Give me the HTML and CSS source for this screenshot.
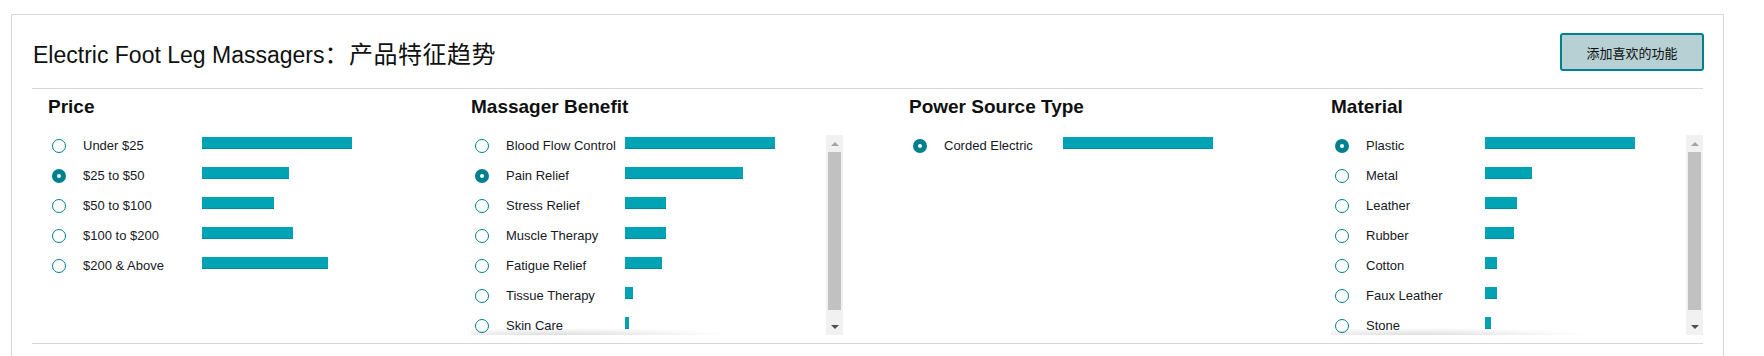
FILE: index.html
```html
<!DOCTYPE html>
<html lang="zh-CN">
<head>
    <meta charset="UTF-8">
    <meta name="viewport" content="width=device-width, initial-scale=1.0">
    <title>产品特征趋势</title>
    <link rel="stylesheet" href="styles.css">
</head>
<body>
    <div class="card">
        <div class="card-header">
            <h1 class="card-title">Electric Foot Leg Massagers<span class="title-zh">：产品特征趋势</span></h1>
            <button class="add-btn">添加喜欢的功能</button>
        </div>

        <div class="features">
            <!-- Price -->
            <div class="feature">
                <h2>Price</h2>
                <div class="list-wrap">
                    <div class="list">
                        <label class="row"><input type="radio" class="radio" name="price"><span class="name">Under $25</span><span class="bar" style="width: 150px;"></span></label>
                        <label class="row"><input type="radio" class="radio" name="price" checked><span class="name">$25 to $50</span><span class="bar" style="width: 87px;"></span></label>
                        <label class="row"><input type="radio" class="radio" name="price"><span class="name">$50 to $100</span><span class="bar" style="width: 72px;"></span></label>
                        <label class="row"><input type="radio" class="radio" name="price"><span class="name">$100 to $200</span><span class="bar" style="width: 91px;"></span></label>
                        <label class="row"><input type="radio" class="radio" name="price"><span class="name">$200 &amp; Above</span><span class="bar" style="width: 126px;"></span></label>
                    </div>
                </div>
            </div>

            <!-- Massager Benefit -->
            <div class="feature">
                <h2>Massager Benefit</h2>
                <div class="list-wrap scroll">
                    <div class="list">
                        <label class="row"><input type="radio" class="radio" name="benefit"><span class="name">Blood Flow Control</span><span class="bar" style="width: 150px;"></span></label>
                        <label class="row"><input type="radio" class="radio" name="benefit" checked><span class="name">Pain Relief</span><span class="bar" style="width: 118px;"></span></label>
                        <label class="row"><input type="radio" class="radio" name="benefit"><span class="name">Stress Relief</span><span class="bar" style="width: 41px;"></span></label>
                        <label class="row"><input type="radio" class="radio" name="benefit"><span class="name">Muscle Therapy</span><span class="bar" style="width: 41px;"></span></label>
                        <label class="row"><input type="radio" class="radio" name="benefit"><span class="name">Fatigue Relief</span><span class="bar" style="width: 37px;"></span></label>
                        <label class="row"><input type="radio" class="radio" name="benefit"><span class="name">Tissue Therapy</span><span class="bar" style="width: 8px;"></span></label>
                        <label class="row"><input type="radio" class="radio" name="benefit"><span class="name">Skin Care</span><span class="bar" style="width: 4px;"></span></label>
                    </div>
                    <div class="scrollbar">
                        <div class="sb-up"></div>
                        <div class="sb-track"><div class="sb-thumb"></div></div>
                        <div class="sb-down"></div>
                    </div>
                </div>
            </div>

            <!-- Power Source Type -->
            <div class="feature">
                <h2>Power Source Type</h2>
                <div class="list-wrap">
                    <div class="list">
                        <label class="row"><input type="radio" class="radio" name="power" checked><span class="name">Corded Electric</span><span class="bar" style="width: 150px;"></span></label>
                    </div>
                </div>
            </div>

            <!-- Material -->
            <div class="feature">
                <h2>Material</h2>
                <div class="list-wrap scroll">
                    <div class="list">
                        <label class="row"><input type="radio" class="radio" name="material" checked><span class="name">Plastic</span><span class="bar" style="width: 150px;"></span></label>
                        <label class="row"><input type="radio" class="radio" name="material"><span class="name">Metal</span><span class="bar" style="width: 47px;"></span></label>
                        <label class="row"><input type="radio" class="radio" name="material"><span class="name">Leather</span><span class="bar" style="width: 32px;"></span></label>
                        <label class="row"><input type="radio" class="radio" name="material"><span class="name">Rubber</span><span class="bar" style="width: 29px;"></span></label>
                        <label class="row"><input type="radio" class="radio" name="material"><span class="name">Cotton</span><span class="bar" style="width: 12px;"></span></label>
                        <label class="row"><input type="radio" class="radio" name="material"><span class="name">Faux Leather</span><span class="bar" style="width: 12px;"></span></label>
                        <label class="row"><input type="radio" class="radio" name="material"><span class="name">Stone</span><span class="bar" style="width: 6px;"></span></label>
                    </div>
                    <div class="scrollbar">
                        <div class="sb-up"></div>
                        <div class="sb-track"><div class="sb-thumb"></div></div>
                        <div class="sb-down"></div>
                    </div>
                </div>
            </div>
        </div>
    </div>
</body>
</html>
```

FILE: styles.css
```css
body {
    margin: 0;
    font-family: "Liberation Sans", "Noto Sans CJK SC", sans-serif;
    color: #0f1111;
    background: #fff;
}

.card {
    margin: 14px 40px 0 11px;
    padding: 0 20px 20px;
    border: 1px solid #d5d9d9;
}

.card-header {
    display: flex;
    justify-content: space-between;
    align-items: flex-start;
    padding: 18px 0 17px;
    border-bottom: 1px solid #d5d9d9;
}

.card-title {
    margin: 8px 0 0 1px;
    font-size: 23px;
    font-weight: normal;
    line-height: 28px;
}

.title-zh {
    font-size: 24px;
    letter-spacing: 0.5px;
}

.add-btn {
    width: 144px;
    height: 38px;
    margin-right: -1px;
    border: 2px solid #007f8f;
    border-radius: 3px;
    background: #b6d0d4;
    color: #0f1111;
    font-family: "Liberation Sans", "Noto Sans CJK SC", sans-serif;
    font-size: 13px;
    cursor: pointer;
}

.features {
    display: grid;
    grid-template-columns: 423px 438px 422px 388px;
    padding: 7px 0 8px;
    border-bottom: 1px solid #d5d9d9;
}

.feature {
    padding-left: 16px;
}

.feature h2 {
    margin: 0 0 17px;
    font-size: 19px;
    line-height: 22px;
    font-weight: bold;
}

.list-wrap {
    position: relative;
    display: flex;
    width: 372px;
    height: 200px;
}

.list {
    flex: 1;
    overflow: hidden;
}

/* sombra difuminada al final de la lista */
.list-wrap.scroll::after {
    content: "";
    position: absolute;
    left: 0;
    right: 17px;
    bottom: 0;
    height: 9px;
    background: radial-gradient(ellipse 60% 100% at 25% 100%, rgba(0, 0, 0, 0.13), rgba(0, 0, 0, 0) 80%);
    pointer-events: none;
}

.row {
    display: flex;
    align-items: flex-start;
    height: 22px;
    margin-bottom: 8px;
    cursor: pointer;
}

.radio {
    appearance: none;
    -webkit-appearance: none;
    flex: none;
    width: 14px;
    height: 14px;
    margin: 4px 17px 0 4px;
    border: 1.5px solid #007f8f;
    border-radius: 50%;
    background: #fff;
    box-sizing: border-box;
}

.radio:checked {
    border-width: 5px;
}

.name {
    flex: none;
    width: 119px;
    font-size: 13px;
    line-height: 22px;
    white-space: nowrap;
    color: #16191f;
}

.bar {
    flex: none;
    height: 12px;
    margin-top: 2px;
    background: #00a3b3;
    border-bottom: 1px solid #008c9a;
    box-sizing: border-box;
}

/* Barra de desplazamiento */
.scrollbar {
    flex: none;
    display: flex;
    flex-direction: column;
    width: 17px;
    background: #f1f1f1;
}

.sb-up,
.sb-down {
    flex: none;
    height: 17px;
    display: flex;
    align-items: center;
    justify-content: center;
}

.sb-up::before {
    content: "";
    border-left: 4px solid transparent;
    border-right: 4px solid transparent;
    border-bottom: 4px solid #a3a3a3;
}

.sb-down::before {
    content: "";
    border-left: 4px solid transparent;
    border-right: 4px solid transparent;
    border-top: 4px solid #505050;
}

.sb-track {
    flex: 1;
}

.sb-thumb {
    height: 158px;
    margin: 0 2px;
    background: #c1c1c1;
}
```
